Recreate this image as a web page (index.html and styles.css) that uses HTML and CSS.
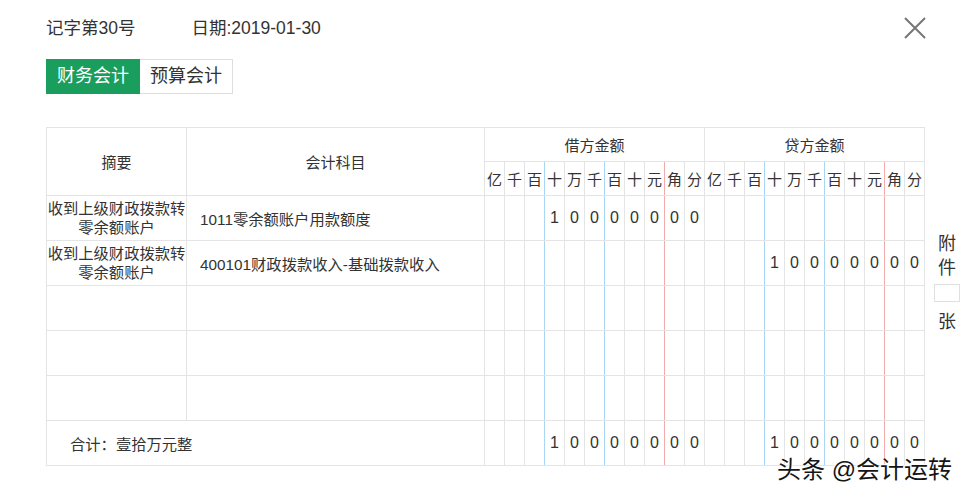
FILE: index.html
```html
<!DOCTYPE html>
<html lang="zh">
<head>
<meta charset="utf-8">
<title>凭证</title>
<link rel="stylesheet" href="styles.css">
</head>
<body>
<div class="page">
  <div class="head">
    <div class="head-info">
      <span class="voucher-no">记字第30号</span>
      <span class="voucher-date">日期:2019-01-30</span>
    </div>
    <svg class="close" width="24" height="24" viewBox="0 0 24 24" aria-label="关闭">
      <path d="M2 2 L22 22 M22 2 L2 22" stroke="#767676" stroke-width="2" fill="none"/>
    </svg>
  </div>

  <div class="tabs">
    <span class="tab active">财务会计</span>
    <span class="tab">预算会计</span>
  </div>

  <div class="body-row">
    <table class="voucher">
      <colgroup>
        <col class="c-summary"><col class="c-subject">
        <col class="c-d"><col class="c-d"><col class="c-d"><col class="c-d"><col class="c-d"><col class="c-d"><col class="c-d"><col class="c-d"><col class="c-d"><col class="c-d"><col class="c-d">
        <col class="c-d"><col class="c-d"><col class="c-d"><col class="c-d"><col class="c-d"><col class="c-d"><col class="c-d"><col class="c-d"><col class="c-d"><col class="c-d"><col class="c-d">
      </colgroup>
      <thead>
        <tr class="h1">
          <th rowspan="2">摘要</th>
          <th rowspan="2">会计科目</th>
          <th colspan="11">借方金额</th>
          <th colspan="11">贷方金额</th>
        </tr>
        <tr class="h2">
          <th>亿</th><th>千</th><th class="b">百</th><th>十</th><th>万</th><th class="b">千</th><th>百</th><th>十</th><th class="r">元</th><th>角</th><th>分</th>
          <th>亿</th><th>千</th><th class="b">百</th><th>十</th><th>万</th><th class="b">千</th><th>百</th><th>十</th><th class="r">元</th><th>角</th><th>分</th>
        </tr>
      </thead>
      <tbody>
        <tr>
          <td class="summary">收到上级财政拨款转零余额账户</td>
          <td class="subject">1011零余额账户用款额度</td>
          <td></td><td></td><td class="b"></td><td>1</td><td>0</td><td class="b">0</td><td>0</td><td>0</td><td class="r">0</td><td>0</td><td>0</td>
          <td></td><td></td><td class="b"></td><td></td><td></td><td class="b"></td><td></td><td></td><td class="r"></td><td></td><td></td>
        </tr>
        <tr>
          <td class="summary">收到上级财政拨款转零余额账户</td>
          <td class="subject">400101财政拨款收入-基础拨款收入</td>
          <td></td><td></td><td class="b"></td><td></td><td></td><td class="b"></td><td></td><td></td><td class="r"></td><td></td><td></td>
          <td></td><td></td><td class="b"></td><td>1</td><td>0</td><td class="b">0</td><td>0</td><td>0</td><td class="r">0</td><td>0</td><td>0</td>
        </tr>
        <tr>
          <td class="summary"></td><td class="subject"></td>
          <td></td><td></td><td class="b"></td><td></td><td></td><td class="b"></td><td></td><td></td><td class="r"></td><td></td><td></td>
          <td></td><td></td><td class="b"></td><td></td><td></td><td class="b"></td><td></td><td></td><td class="r"></td><td></td><td></td>
        </tr>
        <tr>
          <td class="summary"></td><td class="subject"></td>
          <td></td><td></td><td class="b"></td><td></td><td></td><td class="b"></td><td></td><td></td><td class="r"></td><td></td><td></td>
          <td></td><td></td><td class="b"></td><td></td><td></td><td class="b"></td><td></td><td></td><td class="r"></td><td></td><td></td>
        </tr>
        <tr>
          <td class="summary"></td><td class="subject"></td>
          <td></td><td></td><td class="b"></td><td></td><td></td><td class="b"></td><td></td><td></td><td class="r"></td><td></td><td></td>
          <td></td><td></td><td class="b"></td><td></td><td></td><td class="b"></td><td></td><td></td><td class="r"></td><td></td><td></td>
        </tr>
        <tr class="total">
          <td class="total-label" colspan="2">合计：壹拾万元整</td>
          <td></td><td></td><td class="b"></td><td>1</td><td>0</td><td class="b">0</td><td>0</td><td>0</td><td class="r">0</td><td>0</td><td>0</td>
          <td></td><td></td><td class="b"></td><td>1</td><td>0</td><td class="b">0</td><td>0</td><td>0</td><td class="r">0</td><td>0</td><td>0</td>
        </tr>
      </tbody>
    </table>

    <div class="attach">
      <span class="attach-label">附<br>件</span>
      <span class="attach-box"></span>
      <span class="attach-unit">张</span>
    </div>
  </div>

  <div class="watermark">头条 @会计运转</div>
</div>
</body>
</html>
```

FILE: styles.css
```css
* { box-sizing: border-box; }

html, body {
  margin: 0;
  padding: 0;
  background: #fff;
}

body {
  font-family: "Liberation Sans", "Noto Sans CJK SC", sans-serif;
  color: #333;
}

.page {
  position: relative;
  width: 969px;
  height: 498px;
  overflow: hidden;
  padding-left: 46px;
}

.head {
  display: flex;
  align-items: center;
  justify-content: space-between;
  padding-top: 15px;
  padding-right: 42px;
  height: 40px;
}

.head-info {
  display: flex;
  gap: 56px;
  font-size: 17.5px;
  line-height: 24px;
}

.close {
  display: block;
}

.tabs {
  display: flex;
  margin-top: 19px;
}

.tab {
  display: block;
  height: 35px;
  line-height: 33px;
  padding: 0 10px;
  font-size: 18px;
  border: 1px solid #dedede;
  border-left: 0;
  color: #333;
  background: #fff;
}

.tab.active {
  background: #1a9e5e;
  border: 1px solid #1a9e5e;
  color: #fff;
}

.body-row {
  display: flex;
  align-items: flex-start;
  margin-top: 33px;
}

.voucher {
  border-collapse: collapse;
  table-layout: fixed;
  width: 878px;
  font-size: 15px;
}

.c-summary { width: 140px; }
.c-subject { width: 298px; }
.c-d { width: 20px; }

.voucher th,
.voucher td {
  border: 1px solid #e4e4e4;
  padding: 0;
  text-align: center;
  vertical-align: middle;
  font-weight: normal;
  color: #333;
}

.voucher tbody td {
  font-size: 16px;
}

.voucher thead tr { height: 34px; }
.voucher tbody tr { height: 45px; }

.voucher .b { border-right-color: #a9d6f5; }
.voucher .b + td,
.voucher .b + th { border-left-color: #a9d6f5; }
.voucher .r { border-right-color: #f3abab; }
.voucher .r + td,
.voucher .r + th { border-left-color: #f3abab; }

.voucher .summary {
  font-size: 15.3px;
  line-height: 19px;
  padding: 0;
}

.voucher .subject {
  font-size: 15.3px;
  text-align: left;
  padding-left: 13px;
}

.voucher .total-label {
  font-size: 15.3px;
  text-align: left;
  padding-left: 23px;
}

.attach {
  width: 45px;
  display: flex;
  flex-direction: column;
  align-items: center;
  padding-top: 105px;
  font-size: 18px;
  line-height: 24px;
  color: #333;
}

.attach-label {
  display: block;
  text-align: center;
}

.attach-box {
  display: block;
  width: 26px;
  height: 18px;
  margin-top: 4px;
  border: 1px solid #e0e0e0;
}

.attach-unit {
  display: block;
  margin-top: 8px;
}

.watermark {
  position: absolute;
  left: 777px;
  top: 454px;
  font-size: 24px;
  line-height: 32px;
  color: #151515;
  text-shadow: 0 0 2px #fff, 0 0 2px #fff, -1px -1px 0 #fff;
  white-space: nowrap;
}
```
